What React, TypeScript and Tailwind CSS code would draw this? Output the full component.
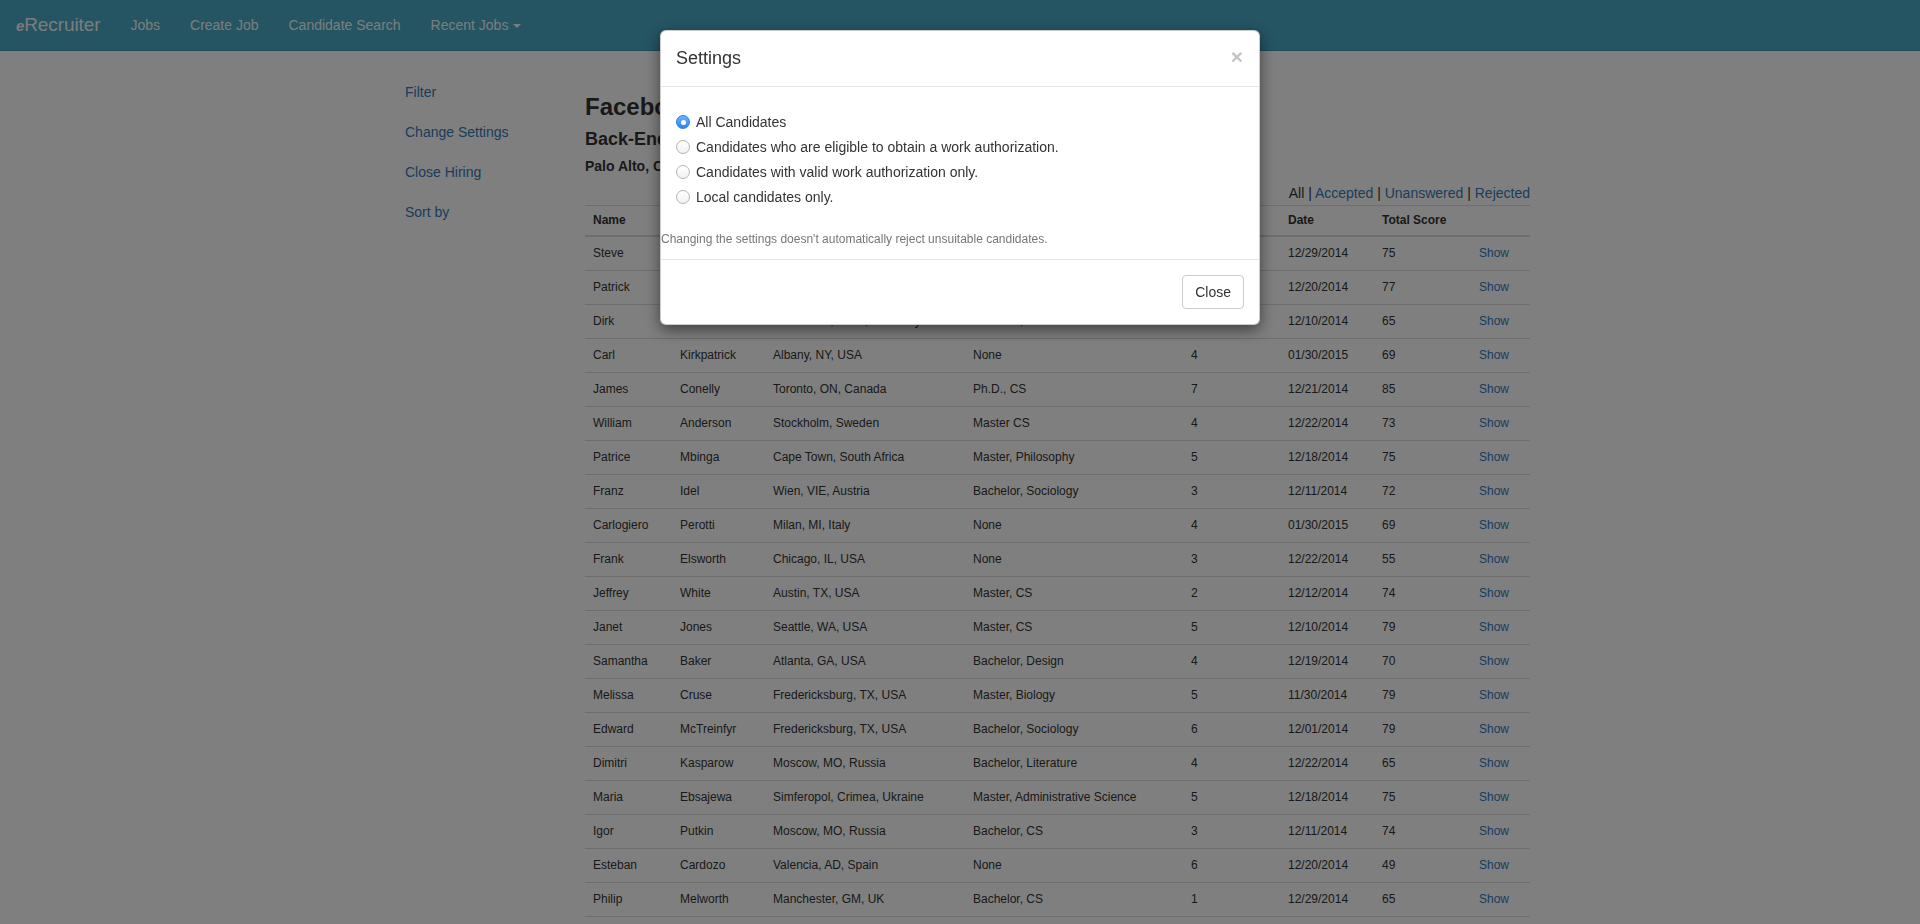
import { useState } from 'react'

type Candidate = {
  first: string
  last: string
  location: string
  education: string
  experience: number
  date: string
  score: number
}

const candidates: Candidate[] = [
  { first: 'Steve', last: 'Miller', location: 'San Jose, CA, USA', education: 'Master, CS', experience: 5, date: '12/29/2014', score: 75 },
  { first: 'Patrick', last: 'Stewart', location: 'London, LDN, UK', education: 'Bachelor, CS', experience: 3, date: '12/20/2014', score: 77 },
  { first: 'Dirk', last: 'Dotter', location: 'Düsseldorf, NRW, Germany', education: 'Bachelor, CS', experience: 2, date: '12/10/2014', score: 65 },
  { first: 'Carl', last: 'Kirkpatrick', location: 'Albany, NY, USA', education: 'None', experience: 4, date: '01/30/2015', score: 69 },
  { first: 'James', last: 'Conelly', location: 'Toronto, ON, Canada', education: 'Ph.D., CS', experience: 7, date: '12/21/2014', score: 85 },
  { first: 'William', last: 'Anderson', location: 'Stockholm, Sweden', education: 'Master CS', experience: 4, date: '12/22/2014', score: 73 },
  { first: 'Patrice', last: 'Mbinga', location: 'Cape Town, South Africa', education: 'Master, Philosophy', experience: 5, date: '12/18/2014', score: 75 },
  { first: 'Franz', last: 'Idel', location: 'Wien, VIE, Austria', education: 'Bachelor, Sociology', experience: 3, date: '12/11/2014', score: 72 },
  { first: 'Carlogiero', last: 'Perotti', location: 'Milan, MI, Italy', education: 'None', experience: 4, date: '01/30/2015', score: 69 },
  { first: 'Frank', last: 'Elsworth', location: 'Chicago, IL, USA', education: 'None', experience: 3, date: '12/22/2014', score: 55 },
  { first: 'Jeffrey', last: 'White', location: 'Austin, TX, USA', education: 'Master, CS', experience: 2, date: '12/12/2014', score: 74 },
  { first: 'Janet', last: 'Jones', location: 'Seattle, WA, USA', education: 'Master, CS', experience: 5, date: '12/10/2014', score: 79 },
  { first: 'Samantha', last: 'Baker', location: 'Atlanta, GA, USA', education: 'Bachelor, Design', experience: 4, date: '12/19/2014', score: 70 },
  { first: 'Melissa', last: 'Cruse', location: 'Fredericksburg, TX, USA', education: 'Master, Biology', experience: 5, date: '11/30/2014', score: 79 },
  { first: 'Edward', last: 'McTreinfyr', location: 'Fredericksburg, TX, USA', education: 'Bachelor, Sociology', experience: 6, date: '12/01/2014', score: 79 },
  { first: 'Dimitri', last: 'Kasparow', location: 'Moscow, MO, Russia', education: 'Bachelor, Literature', experience: 4, date: '12/22/2014', score: 65 },
  { first: 'Maria', last: 'Ebsajewa', location: 'Simferopol, Crimea, Ukraine', education: 'Master, Administrative Science', experience: 5, date: '12/18/2014', score: 75 },
  { first: 'Igor', last: 'Putkin', location: 'Moscow, MO, Russia', education: 'Bachelor, CS', experience: 3, date: '12/11/2014', score: 74 },
  { first: 'Esteban', last: 'Cardozo', location: 'Valencia, AD, Spain', education: 'None', experience: 6, date: '12/20/2014', score: 49 },
  { first: 'Philip', last: 'Melworth', location: 'Manchester, GM, UK', education: 'Bachelor, CS', experience: 1, date: '12/29/2014', score: 65 },
]

const options = [
  'All Candidates',
  'Candidates who are eligible to obtain a work authorization.',
  'Candidates with valid work authorization only.',
  'Local candidates only.',
]

function Radio({ checked }: { checked: boolean }) {
  if (checked) {
    return (
      <span className="flex h-[14px] w-[14px] items-center justify-center rounded-full border border-[#2f7fe6] bg-gradient-to-b from-[#6cb3fa] to-[#2a82f1]">
        <span className="h-[5px] w-[5px] rounded-full bg-white" />
      </span>
    )
  }
  return <span className="h-[14px] w-[14px] rounded-full border border-[#b5b5b5] bg-gradient-to-b from-white to-[#f1f1f1]" />
}

function Navbar() {
  return (
    <nav className="flex h-[51px] items-center border-b border-[#3f98b4] bg-[#4aa8c4] text-[14px] text-[#f4fbfd]">
      <a className="flex items-baseline px-[15px] pl-[16px] text-[19px] tracking-[-0.1px]">
        <span className="text-[15px] font-bold italic">e</span>
        <span>Recruiter</span>
      </a>
      <a className="px-[15px]">Jobs</a>
      <a className="px-[15px]">Create Job</a>
      <a className="px-[15px]">Candidate Search</a>
      <a className="flex items-center gap-[5px] px-[15px]">
        Recent Jobs
        <span className="mt-[2px] h-0 w-0 border-x-[4px] border-t-[4px] border-x-transparent border-t-current" />
      </a>
    </nav>
  )
}

function SettingsModal({ selected, onSelect }: { selected: number; onSelect: (i: number) => void }) {
  return (
    <div className="fixed inset-0 z-20 flex justify-center pt-[30px]">
      <div className="h-fit w-[600px] rounded-[6px] border border-black/20 bg-white text-[#333] shadow-[0_5px_15px_rgba(0,0,0,0.5)]">
        <div className="flex items-center justify-between border-b border-[#e5e5e5] px-[15px] py-[15px]">
          <h4 className="text-[18px] leading-[25px]">Settings</h4>
          <button className="-mt-[5px] mr-[1px] text-[21px] font-bold leading-none text-[#c4c4c4]">×</button>
        </div>
        <div className="px-[15px] pt-[25px] pb-[11px]">
          <div className="flex flex-col gap-[5px]">
            {options.map((label, i) => (
              <label key={label} onClick={() => onSelect(i)} className="flex h-[20px] cursor-pointer items-center gap-[6px] text-[14px]">
                <Radio checked={selected === i} />
                {label}
              </label>
            ))}
          </div>
          <p className="-ml-[15px] mt-[24px] text-[12px] leading-[17px] text-[#777]">
            Changing the settings doesn't automatically reject unsuitable candidates.
          </p>
        </div>
        <div className="flex justify-end border-t border-[#e5e5e5] p-[15px]">
          <button className="rounded-[4px] border border-[#ccc] bg-white px-[12px] py-[6px] text-[14px] leading-[20px] text-[#333]">
            Close
          </button>
        </div>
      </div>
    </div>
  )
}

export default function App() {
  const [selected, setSelected] = useState(0)

  return (
    <div className="relative h-screen overflow-hidden bg-white font-['Liberation_Sans',Arial,sans-serif] text-[#333]">
      <Navbar />

      <div className="mx-auto mt-[21px] flex w-[1170px]">
        <aside className="w-[195px] px-[15px]">
          <ul className="flex flex-col text-[14px] leading-[20px] text-[#337ab7]">
            <li className="px-[15px] py-[10px]">Filter</li>
            <li className="px-[15px] py-[10px]">Change Settings</li>
            <li className="px-[15px] py-[10px]">Close Hiring</li>
            <li className="px-[15px] py-[10px]">Sort by</li>
          </ul>
        </aside>

        <main className="w-[975px] px-[15px] pt-[21px]">
          <h2 className="text-[24px] font-bold leading-[28px]">Facebook</h2>
          <h4 className="mt-[8px] text-[18px] font-bold leading-[20px]">Back-End Developer</h4>
          <h5 className="mt-[7px] text-[14px] font-bold leading-[20px]">Palo Alto, CA, USA</h5>

          <div className="mt-[7px] text-right text-[14px] leading-[20px]">
            All | <a className="text-[#337ab7]">Accepted</a> | <a className="text-[#337ab7]">Unanswered</a> |{' '}
            <a className="text-[#337ab7]">Rejected</a>
          </div>

          <table className="mt-[2px] w-full table-fixed text-[12px] leading-[17px]">
            <thead>
              <tr>
                <th className="w-[87px] border-t border-b-2 border-[#ddd] px-2 py-[6px] text-left">Name</th>
                <th className="w-[93px] border-t border-b-2 border-[#ddd] px-2 py-[6px] text-left">Surname</th>
                <th className="w-[200px] border-t border-b-2 border-[#ddd] px-2 py-[6px] text-left">Location</th>
                <th className="w-[218px] border-t border-b-2 border-[#ddd] px-2 py-[6px] text-left">Education</th>
                <th className="w-[97px] border-t border-b-2 border-[#ddd] px-2 py-[6px] text-left">Experience</th>
                <th className="w-[94px] border-t border-b-2 border-[#ddd] px-2 py-[6px] text-left">Date</th>
                <th className="w-[97px] border-t border-b-2 border-[#ddd] px-2 py-[6px] text-left">Total Score</th>
                <th className="border-t border-b-2 border-[#ddd] px-2 py-[6px]"></th>
              </tr>
            </thead>
            <tbody>
              {candidates.map((c) => (
                <tr key={c.first + c.last} className="border-b border-[#ddd]">
                  <td className="border-t border-[#ddd] px-2 py-2">{c.first}</td>
                  <td className="border-t border-[#ddd] px-2 py-2">{c.last}</td>
                  <td className="border-t border-[#ddd] px-2 py-2">{c.location}</td>
                  <td className="border-t border-[#ddd] px-2 py-2">{c.education}</td>
                  <td className="border-t border-[#ddd] px-2 py-2">{c.experience}</td>
                  <td className="border-t border-[#ddd] px-2 py-2">{c.date}</td>
                  <td className="border-t border-[#ddd] px-2 py-2">{c.score}</td>
                  <td className="border-t border-[#ddd] px-2 py-2 text-[#337ab7]">Show</td>
                </tr>
              ))}
            </tbody>
          </table>
        </main>
      </div>

      {/* modal backdrop */}
      <div className="fixed inset-0 z-10 bg-black/50" />
      <SettingsModal selected={selected} onSelect={setSelected} />
    </div>
  )
}
